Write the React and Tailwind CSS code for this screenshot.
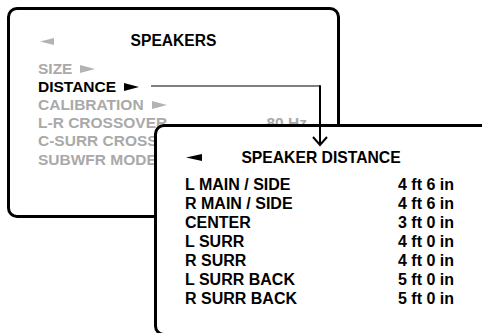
const font = { fontFamily: '"Liberation Sans", Arial, Helvetica, sans-serif' };

const LeftTri = ({ color, w, h }) => (
  <svg width={w} height={h} viewBox={`0 0 ${w} ${h}`} className="shrink-0">
    <polygon points={`0,${h / 2} ${w},0 ${w},${h}`} fill={color} />
  </svg>
);

const RightTri = ({ color }) => (
  <svg width="15" height="8" viewBox="0 0 15 8" className="shrink-0">
    <polygon points="0,0 15,4 0,8" fill={color} />
  </svg>
);

const speakerMenu = [
  { label: 'SIZE', arrow: true },
  { label: 'DISTANCE', arrow: true, active: true },
  { label: 'CALIBRATION', arrow: true },
  { label: 'L-R CROSSOVER', value: '80 Hz' },
  { label: 'C-SURR CROSSOVER', value: '80 Hz' },
  { label: 'SUBWFR MODE' },
];

const distances = [
  ['L MAIN / SIDE', '4 ft 6 in'],
  ['R MAIN / SIDE', '4 ft 6 in'],
  ['CENTER', '3 ft 0 in'],
  ['L SURR', '4 ft 0 in'],
  ['R SURR', '4 ft 0 in'],
  ['L SURR BACK', '5 ft 0 in'],
  ['R SURR BACK', '5 ft 0 in'],
];

export default function App() {
  return (
    <div className="relative w-[482px] h-[333px] overflow-hidden bg-white font-bold" style={font}>
      {/* speakers menu */}
      <div className="absolute left-[7px] top-[7px] w-[333px] h-[211px] border-[3px] border-black rounded-[10px] bg-white pt-[22px]">
        <div className="flex items-center px-[30px] h-[18px]">
          <LeftTri color="#b3b3b3" w={14} h={7} />
          <div className="flex-1 text-center text-[15.6px] leading-[18px] text-black">SPEAKERS</div>
          <div className="w-[14px]" />
        </div>
        <div className="mt-[9.5px] pl-[28px] pr-[30px] flex flex-col">
          {speakerMenu.map(item => (
            <div key={item.label} className="flex items-center justify-between h-[18.2px]">
              <div className={`flex items-center gap-[8px] text-[15.5px] leading-[18px] whitespace-nowrap ${item.active ? 'text-black' : 'text-[#a9a9a9]'}`}>
                {item.label}
                {item.arrow && <RightTri color={item.active ? '#000' : '#b3b3b3'} />}
              </div>
              {item.value && (
                <div className="text-[15.5px] leading-[18px] text-[#a9a9a9]">{item.value}</div>
              )}
            </div>
          ))}
        </div>
      </div>

      {/* speaker distance menu */}
      <div className="absolute left-[154px] top-[124px] w-[337px] h-[212px] border-[3px] border-black rounded-[10px] bg-white pt-[21px]">
        <div className="flex items-center pl-[29px] pr-[32px] h-[19px]">
          <LeftTri color="#000" w={16} h={7} />
          <div className="flex-1 text-center text-[15.7px] leading-[19px] text-black">SPEAKER DISTANCE</div>
          <div className="w-[16px]" />
        </div>
        <div className="mt-[8px] ml-[28px] w-[269px] flex flex-col">
          {distances.map(([name, dist]) => (
            <div key={name} className="flex justify-between text-[16px] leading-[19px] text-black">
              <span>{name}</span>
              <span>{dist}</span>
            </div>
          ))}
        </div>
      </div>

      {/* connector arrow */}
      <svg className="absolute inset-0 pointer-events-none" width="482" height="333">
        <line x1="151" y1="86" x2="320" y2="86" stroke="#555" strokeWidth="1.5" />
        <line x1="320" y1="85.3" x2="320" y2="145" stroke="#000" strokeWidth="2" />
        <polyline points="313,137 320,145 327,137" fill="none" stroke="#000" strokeWidth="2" />
      </svg>
    </div>
  );
}
